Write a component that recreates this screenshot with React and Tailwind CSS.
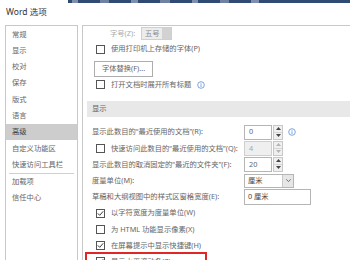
// App.jsx
function Box({ checked }) {
  return (
    <span className="w-[9px] h-[9px] border border-[#555] bg-white flex items-center justify-center shrink-0">
      {checked && (
        <svg width="7" height="7" viewBox="0 0 7 7">
          <path d="M0.8 3.4 L2.7 5.3 L6.2 1.3" stroke="#333" strokeWidth="1" fill="none" />
        </svg>
      )}
    </span>
  );
}

function Info() {
  return (
    <svg width="8" height="8" viewBox="0 0 8 8" className="shrink-0">
      <circle cx="4" cy="4" r="3.3" stroke="#5b8fd6" strokeWidth="0.8" fill="none" />
      <rect x="3.6" y="1.9" width="0.8" height="0.8" fill="#5b8fd6" />
      <rect x="3.6" y="3.2" width="0.8" height="2.8" fill="#5b8fd6" />
    </svg>
  );
}

function Spin({ value, disabled }) {
  const arrow = disabled ? "#b5b5b5" : "#444";
  return (
    <div className="flex h-[15px] gap-[1px]">
      <div
        className={
          disabled
            ? "w-[28px] border border-[#cfcfcf] bg-[#efefef] text-[#a8a8a8] flex items-center pl-[4px]"
            : "w-[28px] border border-[#b5b5b5] bg-white flex items-center pl-[4px]"
        }
      >
        {value}
      </div>
      <div className="w-[10px] border border-[#c8c8c8] bg-[#f0f0f0] flex flex-col">
        <div className="flex-1 flex items-center justify-center border-b border-[#d6d6d6]">
          <svg width="5" height="3" viewBox="0 0 5 3">
            <path d="M0 3 L2.5 0 L5 3 Z" fill={arrow} />
          </svg>
        </div>
        <div className="flex-1 flex items-center justify-center">
          <svg width="5" height="3" viewBox="0 0 5 3">
            <path d="M0 0 L2.5 3 L5 0 Z" fill={arrow} />
          </svg>
        </div>
      </div>
    </div>
  );
}

const navItems = ["常规", "显示", "校对", "保存", "版式", "语言", "高级", "自定义功能区", "快速访问工具栏"];

export default function App() {
  return (
    <div className="w-[350px] h-[260px] overflow-hidden bg-white relative text-[#666] font-['Noto_Sans','Noto_Sans_CJK_SC',sans-serif]">
      {/* ribbon strip behind the dialog */}
      <div className="flex h-[3px]">
        <div className="w-[68px] bg-white" />
        <div className="flex-1 bg-[#2f4b74] flex gap-[22px] pl-[4px]">
          <span className="w-[6px] bg-[#7d8fac]" />
          <span className="w-[9px] bg-[#6f82a2]" />
          <span className="w-[7px] bg-[#7d8fac]" />
          <span className="w-[10px] bg-[#6f82a2]" />
          <span className="w-[6px] bg-[#7d8fac]" />
          <span className="w-[9px] bg-[#6f82a2]" />
          <span className="w-[8px] bg-[#7d8fac]" />
        </div>
      </div>

      <div className="h-[22px] pl-[6px] pt-[3px] text-[8.5px] leading-[12px] text-[#333]">Word 选项</div>

      <div className="flex h-[235px] text-[7.3px] leading-none">
        {/* left nav */}
        <div className="ml-[5px] w-[73px] border border-b-0 border-[#c8c8c8] shrink-0">
          {navItems.map((n) => (
            <div
              key={n}
              className={
                n === "高级"
                  ? "h-[16.3px] flex items-center pl-[6px] bg-[#cdcdcd] text-[#444]"
                  : "h-[16.3px] flex items-center pl-[6px]"
              }
            >
              {n}
            </div>
          ))}
          <div className="mx-[3px] border-t border-[#d0d0d0]" />
          <div className="h-[16.3px] flex items-center pl-[6px]">加载项</div>
          <div className="h-[16.3px] flex items-center pl-[6px]">信任中心</div>
        </div>

        {/* right panel */}
        <div className="ml-[4px] flex-1 border-l border-t border-[#c8c8c8] whitespace-nowrap">
          <div className="h-[15px] flex items-center pl-[27px]">
            <span className="w-[31px] text-[#aaa]">字号(Z):</span>
            <div className="w-[31px] h-[13px] border border-[#cfcfcf] bg-[#ececec] flex items-center">
              <span className="pl-[3px] text-[#8a8a8a]">五号</span>
              <span className="ml-auto w-[9px] h-full bg-[#d2d2d2]" />
            </div>
          </div>
          <div className="h-[16px] flex items-center pl-[13px] gap-[6px]">
            <Box />
            <span>使用打印机上存储的字体(P)</span>
          </div>
          <div className="mt-[4px] ml-[11px] w-[59px] h-[16px] border border-[#adadad] flex items-center justify-center">
            字体替换(F)...
          </div>
          <div className="h-[15px] flex items-center pl-[13px] gap-[6px]">
            <Box />
            <span>打开文档时展开所有标题</span>
            <Info />
          </div>

          <div className="mt-[9px] ml-[4px] h-[16px] bg-[#e8e8e8] flex items-center pl-[5px]">显示</div>

          <div className="mt-[7px]">
            <div className="h-[16.2px] flex items-center">
              <span className="w-[161px] pl-[9px] shrink-0">显示此数目的“最近使用的文档”(R):</span>
              <Spin value="0" />
              <span className="ml-[5px]">
                <Info />
              </span>
            </div>
            <div className="h-[16.2px] flex items-center">
              <span className="w-[161px] pl-[13px] shrink-0 flex items-center gap-[6px]">
                <Box />
                <span>快速访问此数目的“最近使用的文档”(Q):</span>
              </span>
              <Spin value="4" disabled />
            </div>
            <div className="h-[16.2px] flex items-center">
              <span className="w-[161px] pl-[9px] shrink-0">显示此数目的取消固定的“最近的文件夹”(F):</span>
              <Spin value="20" />
            </div>
            <div className="h-[16.2px] flex items-center">
              <span className="w-[161px] pl-[9px] shrink-0">度量单位(M):</span>
              <div className="w-[50px] h-[14px] border border-[#b5b5b5] flex items-center">
                <span className="pl-[3px] text-[#444]">厘米</span>
                <span className="ml-auto w-[11px] h-full bg-[#e6e6e6] border-l border-[#c8c8c8] flex items-center justify-center">
                  <svg width="5" height="3" viewBox="0 0 5 3">
                    <path d="M0.3 0.3 L2.5 2.6 L4.7 0.3" stroke="#555" strokeWidth="0.8" fill="none" />
                  </svg>
                </span>
              </div>
            </div>
            <div className="h-[16.2px] flex items-center">
              <span className="w-[161px] pl-[9px] shrink-0">草稿和大纲视图中的样式区窗格宽度(E):</span>
              <div className="w-[67px] h-[16px] border border-[#b5b5b5] flex items-center pl-[3px] text-[#444]">0 厘米</div>
            </div>
            <div className="h-[16.2px] flex items-center pl-[13px] gap-[6px]">
              <Box checked />
              <span>以字符宽度为度量单位(W)</span>
            </div>
            <div className="h-[16.2px] flex items-center pl-[13px] gap-[6px]">
              <Box />
              <span>为 HTML 功能显示像素(X)</span>
            </div>
            <div className="h-[16.2px] flex items-center pl-[13px] gap-[6px]">
              <Box checked />
              <span>在屏幕提示中显示快捷键(H)</span>
            </div>
            <div className="h-[16.2px] flex items-center pl-[13px] gap-[6px]">
              <Box checked />
              <span>显示水平滚动条(Z)</span>
            </div>
          </div>
        </div>
      </div>

      {/* red highlight annotation */}
      <div className="absolute left-[85px] top-[252px] w-[122px] h-[20px] border-2 border-[#e02626]" />
    </div>
  );
}
